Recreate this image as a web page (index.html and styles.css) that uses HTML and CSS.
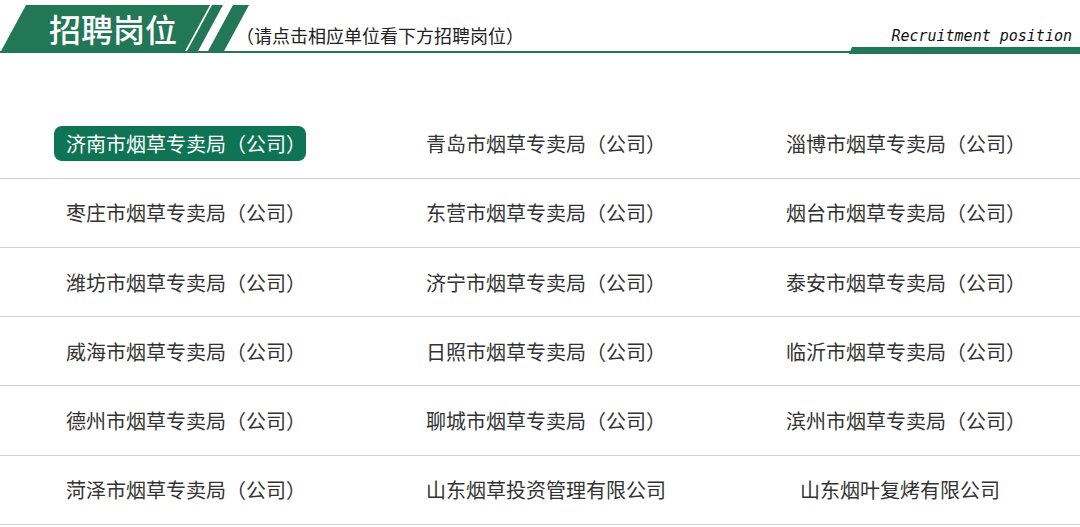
FILE: index.html
```html
<!DOCTYPE html>
<html lang="zh-CN">
<head>
<meta charset="utf-8">
<title>招聘岗位</title>
<link rel="stylesheet" href="styles.css">
</head>
<body>
<header class="head">
  <div class="banner"><h1>招聘岗位</h1></div>
  <span class="stripe s1"></span>
  <span class="stripe s2"></span>
  <p class="sub">（请点击相应单位看下方招聘岗位）</p>
  <div class="en">
    <p>Recruitment position</p>
    <span class="tab"></span>
  </div>
</header>
<main class="list">
  <div class="cell active"><span>济南市烟草专卖局（公司）</span></div>
  <div class="cell"><span>青岛市烟草专卖局（公司）</span></div>
  <div class="cell"><span>淄博市烟草专卖局（公司）</span></div>
  <div class="cell"><span>枣庄市烟草专卖局（公司）</span></div>
  <div class="cell"><span>东营市烟草专卖局（公司）</span></div>
  <div class="cell"><span>烟台市烟草专卖局（公司）</span></div>
  <div class="cell"><span>潍坊市烟草专卖局（公司）</span></div>
  <div class="cell"><span>济宁市烟草专卖局（公司）</span></div>
  <div class="cell"><span>泰安市烟草专卖局（公司）</span></div>
  <div class="cell"><span>威海市烟草专卖局（公司）</span></div>
  <div class="cell"><span>日照市烟草专卖局（公司）</span></div>
  <div class="cell"><span>临沂市烟草专卖局（公司）</span></div>
  <div class="cell"><span>德州市烟草专卖局（公司）</span></div>
  <div class="cell"><span>聊城市烟草专卖局（公司）</span></div>
  <div class="cell"><span>滨州市烟草专卖局（公司）</span></div>
  <div class="cell"><span>菏泽市烟草专卖局（公司）</span></div>
  <div class="cell"><span>山东烟草投资管理有限公司</span></div>
  <div class="cell short"><span>山东烟叶复烤有限公司</span></div>
</main>
</body>
</html>
```
FILE: styles.css
```css
html, body {
  margin: 0;
  background: #fff;
}
body {
  font-family: "Noto Sans CJK SC", "Noto Sans", sans-serif;
  color: #333;
}
.head {
  display: flex;
  align-items: flex-end;
  height: 53px;
  background: linear-gradient(#227756, #227756) left bottom / 100% 2px no-repeat;
}
.banner {
  flex: none;
  box-sizing: border-box;
  width: 210px;
  height: 48px;
  padding-left: 49px;
  padding-bottom: 2px;
  display: flex;
  align-items: center;
  background: #227756;
  clip-path: polygon(26px 0, 210px 0, 184px 100%, 0 100%);
}
.banner h1 {
  margin: 0;
  font-size: 32px;
  line-height: 1;
  font-weight: 500;
  color: #fff;
}
.stripe {
  flex: none;
  height: 48px;
  background: #227756;
}
.s1 {
  width: 37px;
  margin-left: -24px;
  clip-path: polygon(26px 0, 37px 0, 11px 100%, 0 100%);
}
.s2 {
  width: 42px;
  margin-left: -16px;
  clip-path: polygon(26px 0, 42px 0, 16px 100%, 0 100%);
}
.sub {
  margin: 0 0 9px -13px;
  font-size: 18px;
  line-height: 1;
  color: #222;
  white-space: nowrap;
}
.en {
  margin-left: auto;
  margin-bottom: -1px;
  display: flex;
  flex-direction: column;
  align-items: flex-end;
}
.en p {
  margin: 0 8px 3px 0;
  font: oblique 15px/1 "DejaVu Sans Mono", monospace;
  color: #111;
}
.tab {
  width: 231px;
  height: 7px;
  background: #227756;
  clip-path: polygon(3px 0, 100% 0, 100% 100%, 0 100%);
}
.list {
  display: grid;
  grid-template-columns: repeat(3, 1fr);
  grid-auto-rows: 69.2px;
  margin-top: 56.6px;
}
.cell {
  display: flex;
  align-items: center;
  justify-content: center;
  padding-left: 12px;
  border-bottom: 1px solid #d2d2d2;
  font-size: 20px;
  color: #333;
  white-space: nowrap;
}
.cell.short {
  padding-left: 0;
}
.cell.active span {
  margin-left: -12px;
  padding: 0 0 0 12px;
  line-height: 35px;
  border-radius: 8px;
  background: #0f7453;
  color: #fff;
}
```
